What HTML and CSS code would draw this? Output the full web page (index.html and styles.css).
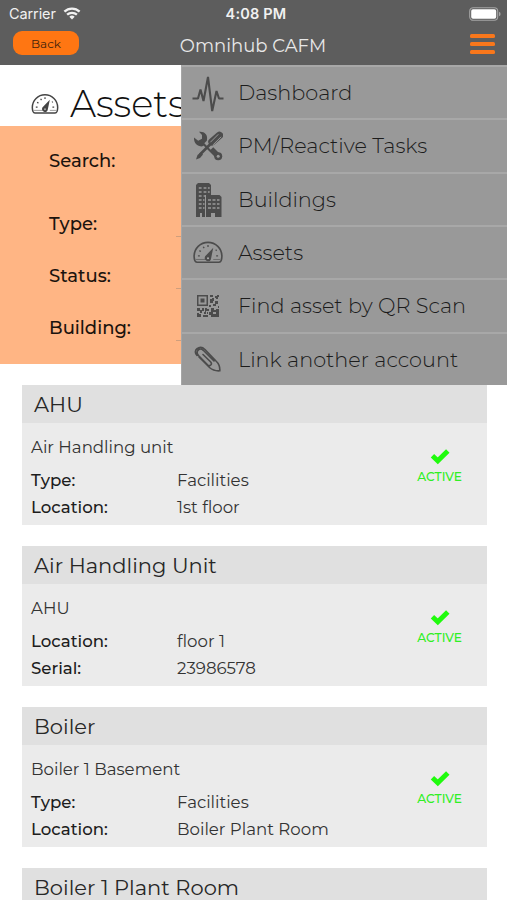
FILE: index.html
```
<!DOCTYPE html>
<html lang="en">
<head>
<meta charset="utf-8">
<title>Omnihub CAFM</title>
<link rel="stylesheet" href="styles.css">
</head>
<body>
<svg class="defs" aria-hidden="true">
  <symbol id="gauge" viewBox="0 0 32 24">
    <path d="M4.500 22.200h23q1.500 0 2.200-1.700a14 14 0 0 0 .8-4.500c0-8.200-6.500-14.500-14.500-14.500S1.500 7.800 1.500 16c0 1.600.3 3.100.8 4.500q.7 1.700 2.200 1.700z" fill="none" stroke="currentColor" stroke-width="1.700"/>
    <path d="M3.500 19.300h10m8 0h7" stroke="currentColor" stroke-width=".6"/>
    <path d="M13 16 21.500 7l-2.500 12.200c-.7 2-2.500 2.500-4.200 1.600-2-1-2.800-2.600-1.800-4.800z" fill="currentColor"/>
    <circle cx="16" cy="18" r="1.100" fill="#aaa"/>
    <path d="M5.500 15.500h2M7 10l1.500 1M11 6l1 1.500M16 4.300v2M24 10l1-.7M24.500 15.500h2" stroke="currentColor" stroke-width="1.400"/>
  </symbol>
  <symbol id="check" viewBox="0 0 18 16">
    <path d="M2.200 7.800 7 12.300 16 3.400" fill="none" stroke="currentColor" stroke-width="4.400"/>
  </symbol>
</svg>

<header class="topbar">
  <div class="status">
    <div class="carrier">Carrier
      <svg class="wifi" viewBox="0 0 18 13"><path d="M1.400 4.700a11 11 0 0 1 15.200 0M4.100 7.700a7.200 7.200 0 0 1 9.800 0" fill="none" stroke="currentColor" stroke-width="2.300"/><path d="M6.300 9.700a4 4 0 0 1 5.400 0L9 12.500z" fill="currentColor"/></svg>
    </div>
    <div class="clock">4:08 PM</div>
    <svg class="battery" viewBox="0 0 32 14"><rect x=".7" y=".7" width="28" height="12.600" rx="3.500" fill="none" stroke="#a5a5a5" stroke-width="1.100"/><rect x="2.200" y="2.200" width="25" height="9.600" rx="1.800" fill="#fff"/><path d="M30 4.700q1.600.6 1.600 2.300T30 9.300z" fill="#a5a5a5"/></svg>
  </div>
  <div class="nav">
    <button class="back">Back</button>
    <h1 class="title">Omnihub CAFM</h1>
    <div class="burger"><i></i><i></i><i></i></div>
  </div>
</header>

<nav class="menu">
  <a class="item"><span class="ico"><svg width="32" height="42" viewBox="0 0 32 42"><path d="M.5 26.500h5.500l2.500-9 3 11.500L16 5l4.200 34 4.300-20 2.500 7.500h4.500" fill="none" stroke="currentColor" stroke-width="2.100" stroke-linejoin="bevel"/></svg></span><span>Dashboard</span></a>
  <a class="item"><span class="ico"><svg width="30" height="30" viewBox="0 0 30 30"><path d="M9 9 25 25" stroke="currentColor" stroke-width="5.600"/><circle cx="25.200" cy="25.200" r="4" fill="currentColor"/><path d="M6 .8C11 0 15 3.500 14 8.500L13 13l-4 2.500C4 15.500.7 12 1 6.500l4.200 3.200L9 7.800 9 4z" fill="currentColor"/><circle cx="25.200" cy="25.200" r="1.500" fill="#999"/><path d="M14.500 15.500 26 4" stroke="#999" stroke-width="9"/><path d="M19 10.800 26.500 4.300" stroke="currentColor" stroke-width="7.400" stroke-linecap="round"/><path d="m17.300 11.300 8-8m-5.200 10.500 8-8" stroke="#999" stroke-width="1"/><path d="M17.500 13 7 23.500" stroke="currentColor" stroke-width="2.600"/><path d="m7.500 21.500-3 2.500L3 28.500 7 27l3-3.500z" fill="currentColor"/></svg></span><span>PM/Reactive Tasks</span></a>
  <a class="item"><span class="ico"><svg width="27" height="35" viewBox="0 0 27 35"><path d="M1 35V3l2-2h11l2 2v10h8.500l2 2v20H20v-4h-4v4h-5V15H10v20H7v-4H5v4z" fill="currentColor"/><path d="M3.800 6h2.800m2 0h2.800m1.500 0h1.800M3.800 10h2.800m2 0h2.800m1.500 0h1.800M3.800 14h2.800m2 0h1.400M3.800 18h2.800m1.400 0h1.500M3.800 22h2.800m1.400 0h1.500M3.800 26h2.800m1.400 0h1.500M13 18h3m1.500 0h3m1.500 0h2.500M13 22h3m1.500 0h3m1.500 0h2.500M13 26h3m1.500 0h3m1.500 0h2.500" stroke="#999" stroke-width="1.500"/><path d="M10.500 13V35" stroke="#999"/></svg></span><span>Buildings</span></a>
  <a class="item"><span class="ico gico"><svg width="32" height="23"><use href="#gauge"/></svg></span><span>Assets</span></a>
  <a class="item"><span class="ico"><svg width="24" height="24" viewBox="0 0 24 24" fill="currentColor"><path d="M1 1h11v11H1zM2.500 2.500v8h8v-8z" fill-rule="evenodd"/><path d="M4.500 4.500h4v4h-4zM14 1h3v2h-3zM19 2h2V1h2v2h-1v2h-2V4h-1zM14 5h2V4h2v3h-1v2h-3zM19 7h3v3h-2v2h-3v-2h2zM13 11h2v2h-2zM22 12h1v2h-1zM1 14h3v2h2v-2h2v3H6v2H4v-2H1zM9 14h2v1h2v2h-3v3H8v-2h1zM15 14h3v2h2v-1h3v8h-8v-2h-2v-3h2zM17 18v2h3v-2zM1 19h2v1h2v3H1zM7 21h5v2H7zM11 18h1v2h-1z" fill-rule="evenodd"/></svg></span><span>Find asset by QR Scan</span></a>
  <a class="item"><span class="ico"><svg width="28" height="28" viewBox="0 0 28 28"><path d="M5 12 15.500 22.500c3 2.600 6.500 3.600 10.300 3.300.3-3.700-.8-7-3.800-9.800L11 4.500C5.500-.5-2 5.500 3 10.500M9 9.500l7.500 7.300c2.300 2.500-.6 5-3 3L4.500 10.500C1 6.500 5.500 2 9.300 5.300L20 16" fill="none" stroke="currentColor" stroke-width="1.600" stroke-linecap="round"/></svg></span><span>Link another account</span></a>
</nav>

<main>
  <div class="heading"><svg class="hgauge"><use href="#gauge"/></svg><h2>Assets</h2></div>
  <form class="filters">
    <div class="field search"><label>Search:</label></div>
    <div class="field"><label>Type:</label><span class="line"></span></div>
    <div class="field"><label>Status:</label><span class="line"></span></div>
    <div class="field"><label>Building:</label><span class="line"></span></div>
  </form>
  <section class="cards">
    <article class="card">
      <h3>AHU</h3>
      <div class="body">
        <div class="info"><p>Air Handling unit</p>
          <dl><dt>Type:</dt><dd>Facilities</dd><dt>Location:</dt><dd>1st floor</dd></dl></div>
        <div class="state"><svg><use href="#check"/></svg>ACTIVE</div>
      </div>
    </article>
    <article class="card">
      <h3>Air Handling Unit</h3>
      <div class="body">
        <div class="info"><p>AHU</p>
          <dl><dt>Location:</dt><dd>floor 1</dd><dt>Serial:</dt><dd>23986578</dd></dl></div>
        <div class="state"><svg><use href="#check"/></svg>ACTIVE</div>
      </div>
    </article>
    <article class="card">
      <h3>Boiler</h3>
      <div class="body">
        <div class="info"><p>Boiler 1 Basement</p>
          <dl><dt>Type:</dt><dd>Facilities</dd><dt>Location:</dt><dd>Boiler Plant Room</dd></dl></div>
        <div class="state"><svg><use href="#check"/></svg>ACTIVE</div>
      </div>
    </article>
    <article class="card last">
      <h3>Boiler 1 Plant Room</h3>
    </article>
  </section>
</main>
</body>
</html>
```
FILE: styles.css
```
* { box-sizing: border-box; }
body {
  margin: 0;
  height: 900px;
  overflow: hidden;
  position: relative;
  background: #fff;
  color: #222;
  font-family: Montserrat, Inter, "Open Sans", sans-serif;
}
h1, h2, h3, p, dl, dd { margin: 0; font-weight: 400; }
svg { display: block; flex: none; }
.defs { position: absolute; width: 0; height: 0; }

.topbar { height: 65px; background: #5d5d5d; color: #f1f1f1; }
.status {
  height: 28px;
  display: grid;
  grid-template-columns: 1fr auto 1fr;
  align-items: center;
  padding: 0 6px 1px 9px;
  font-family: Inter, sans-serif;
  font-size: 14.500px;
}
.carrier { display: flex; align-items: center; gap: 7px; letter-spacing: -.1px; }
.wifi { width: 18px; height: 13px; }
.clock { font-weight: 600; letter-spacing: .2px; margin: 0 -1px 0 1px; }
.battery { width: 32px; height: 14px; justify-self: end; }
.nav {
  height: 37px;
  display: grid;
  grid-template-columns: 1fr auto 1fr;
  padding: 0 12px 0 13px;
}
.back {
  width: 66px;
  height: 24px;
  margin-top: 3px;
  padding: 0;
  border: 0;
  border-radius: 9px;
  background: #ff7612;
  color: #43230b;
  font: 400 12px Montserrat, Inter, sans-serif;
}
.title { font-size: 18px; line-height: 22px; margin: 7px 1px 0 -1px; color: #e8e8e8; }
.burger { display: grid; gap: 4px; width: 25px; margin-top: 5.500px; justify-self: end; align-content: start; }
.burger i { height: 4.200px; border-radius: 1.500px; background: #f9771b; }

.menu {
  position: absolute;
  z-index: 2;
  top: 65px;
  right: 0;
  width: 326px;
  height: 320px;
  display: grid;
  grid-template-rows: repeat(6, 1fr);
  background: #999;
  color: #4c4c4c;
  border-left: 1px solid #a6a6a6;
}
.item {
  display: flex;
  align-items: center;
  border-top: 2px solid #a8a8a8;
  font-size: 20.800px;
  white-space: nowrap;
  font-weight: 300;
}
.item span:last-child { color: #1c1c1c; }
.ico { width: 56px; padding-right: 4px; display: flex; justify-content: center; }

.heading { height: 61px; display: flex; align-items: center; padding: 17px 0 0 31px; gap: 11px; }
.hgauge { width: 28px; height: 22px; color: #444; }
h2 { font-size: 37px; font-weight: 300; line-height: 44px; color: #111; }
.filters { height: 238px; background: #ffb584; padding: 9px 0 0 49px; margin: 0; }
.field { height: 52px; display: flex; align-items: center; font-size: 18px; font-weight: 500; color: #1b130e; }
.field label { width: 127px; }
.search { margin-bottom: 11px; }
.line { width: 120px; height: 1px; margin-top: 25px; background: #cf9e7c; }

.cards { padding: 21px 20px 0 22px; display: grid; gap: 21px; }
.card { height: 140px; background: #ebebeb; }
.last { height: 32px; overflow: hidden; }
h3 { height: 38px; padding-left: 12px; line-height: 39px; font-size: 21px; background: #e0e0e0; color: #272727; }
.body { display: flex; justify-content: space-between; padding: 13px 25px 0 9px; }
.info { font-size: 16.600px; line-height: 22px; color: #333; }
dl { display: grid; grid-template-columns: 146px auto; margin-top: 9px; line-height: 27px; }
dt { font-weight: 500; color: #1d1d1d; }
.state { display: flex; flex-direction: column; align-items: center; padding-top: 11px; font-size: 12.200px; font-weight: 500; line-height: 15px; color: #30ef24; }
.state svg { width: 20px; height: 18px; margin-bottom: 4px; color: #20fb0d; }
```
